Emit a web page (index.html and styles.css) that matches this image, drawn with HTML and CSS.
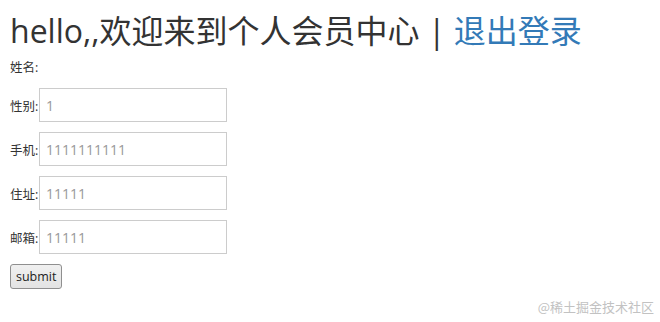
FILE: index.html
```html
<!DOCTYPE html>
<html>
<head>
<meta charset="utf-8">
<link rel="stylesheet" href="styles.css">
</head>
<body>
<div class="page">
  <h1 class="title">hello,,欢迎来到个人会员中心 | <a class="logout" href="#">退出登录</a></h1>
  <div class="name">姓名:</div>
  <form class="form">
    <div class="row"><label class="lbl">性别:</label><input class="field" value="1"></div>
    <div class="row"><label class="lbl">手机:</label><input class="field" value="1111111111"></div>
    <div class="row"><label class="lbl">住址:</label><input class="field" value="11111"></div>
    <div class="row"><label class="lbl">邮箱:</label><input class="field" value="11111"></div>
    <div class="row"><button class="btn" type="button">submit</button></div>
  </form>
</div>
<div class="mark">@稀土掘金技术社区</div>
</body>
</html>
```
FILE: styles.css
```css
html, body { margin: 0; padding: 0; background: #fff; }
body {
  width: 660px; height: 322px; position: relative; overflow: hidden;
  font-family: "Open Sans", "Noto Sans CJK SC", sans-serif;
  color: #333;
}
.page { padding: 10px 10px 0 10px; }
.title {
  margin: 0;
  font-weight: 400;
  font-size: 32px;
  line-height: 42px;
  color: #333;
  font-family: "Open Sans", "Noto Sans CJK SC", sans-serif;
}
.logout { color: #337ab7; text-decoration: none; }
.name { font-size: 12.5px; line-height: 16px; margin-top: 8px; }
.form { display: flex; flex-direction: column; gap: 10px; margin-top: 12px; }
.row { display: flex; align-items: center; font-size: 12.5px; }
.lbl { font-size: 12.5px; width: 29px; }
.field {
  width: 188px; height: 34px; box-sizing: border-box;
  border: 1px solid #ccc; border-radius: 0;
  padding: 0 6px; margin: 0;
  font-family: "Open Sans", sans-serif; font-size: 14px; color: #999;
}
.btn {
  height: 25px; padding: 0 5px; margin: 0;
  font-family: "Open Sans", sans-serif; font-size: 12.5px; color: #222;
  border: 1px solid #8f8f8f; border-radius: 3px;
  background: linear-gradient(#f0f0f0, #e3e3e3);
}
.mark {
  position: absolute; right: 6px; bottom: 6px;
  font-size: 13px; color: #c2c2c2;
  font-family: "Noto Sans CJK SC", sans-serif;
}
```
